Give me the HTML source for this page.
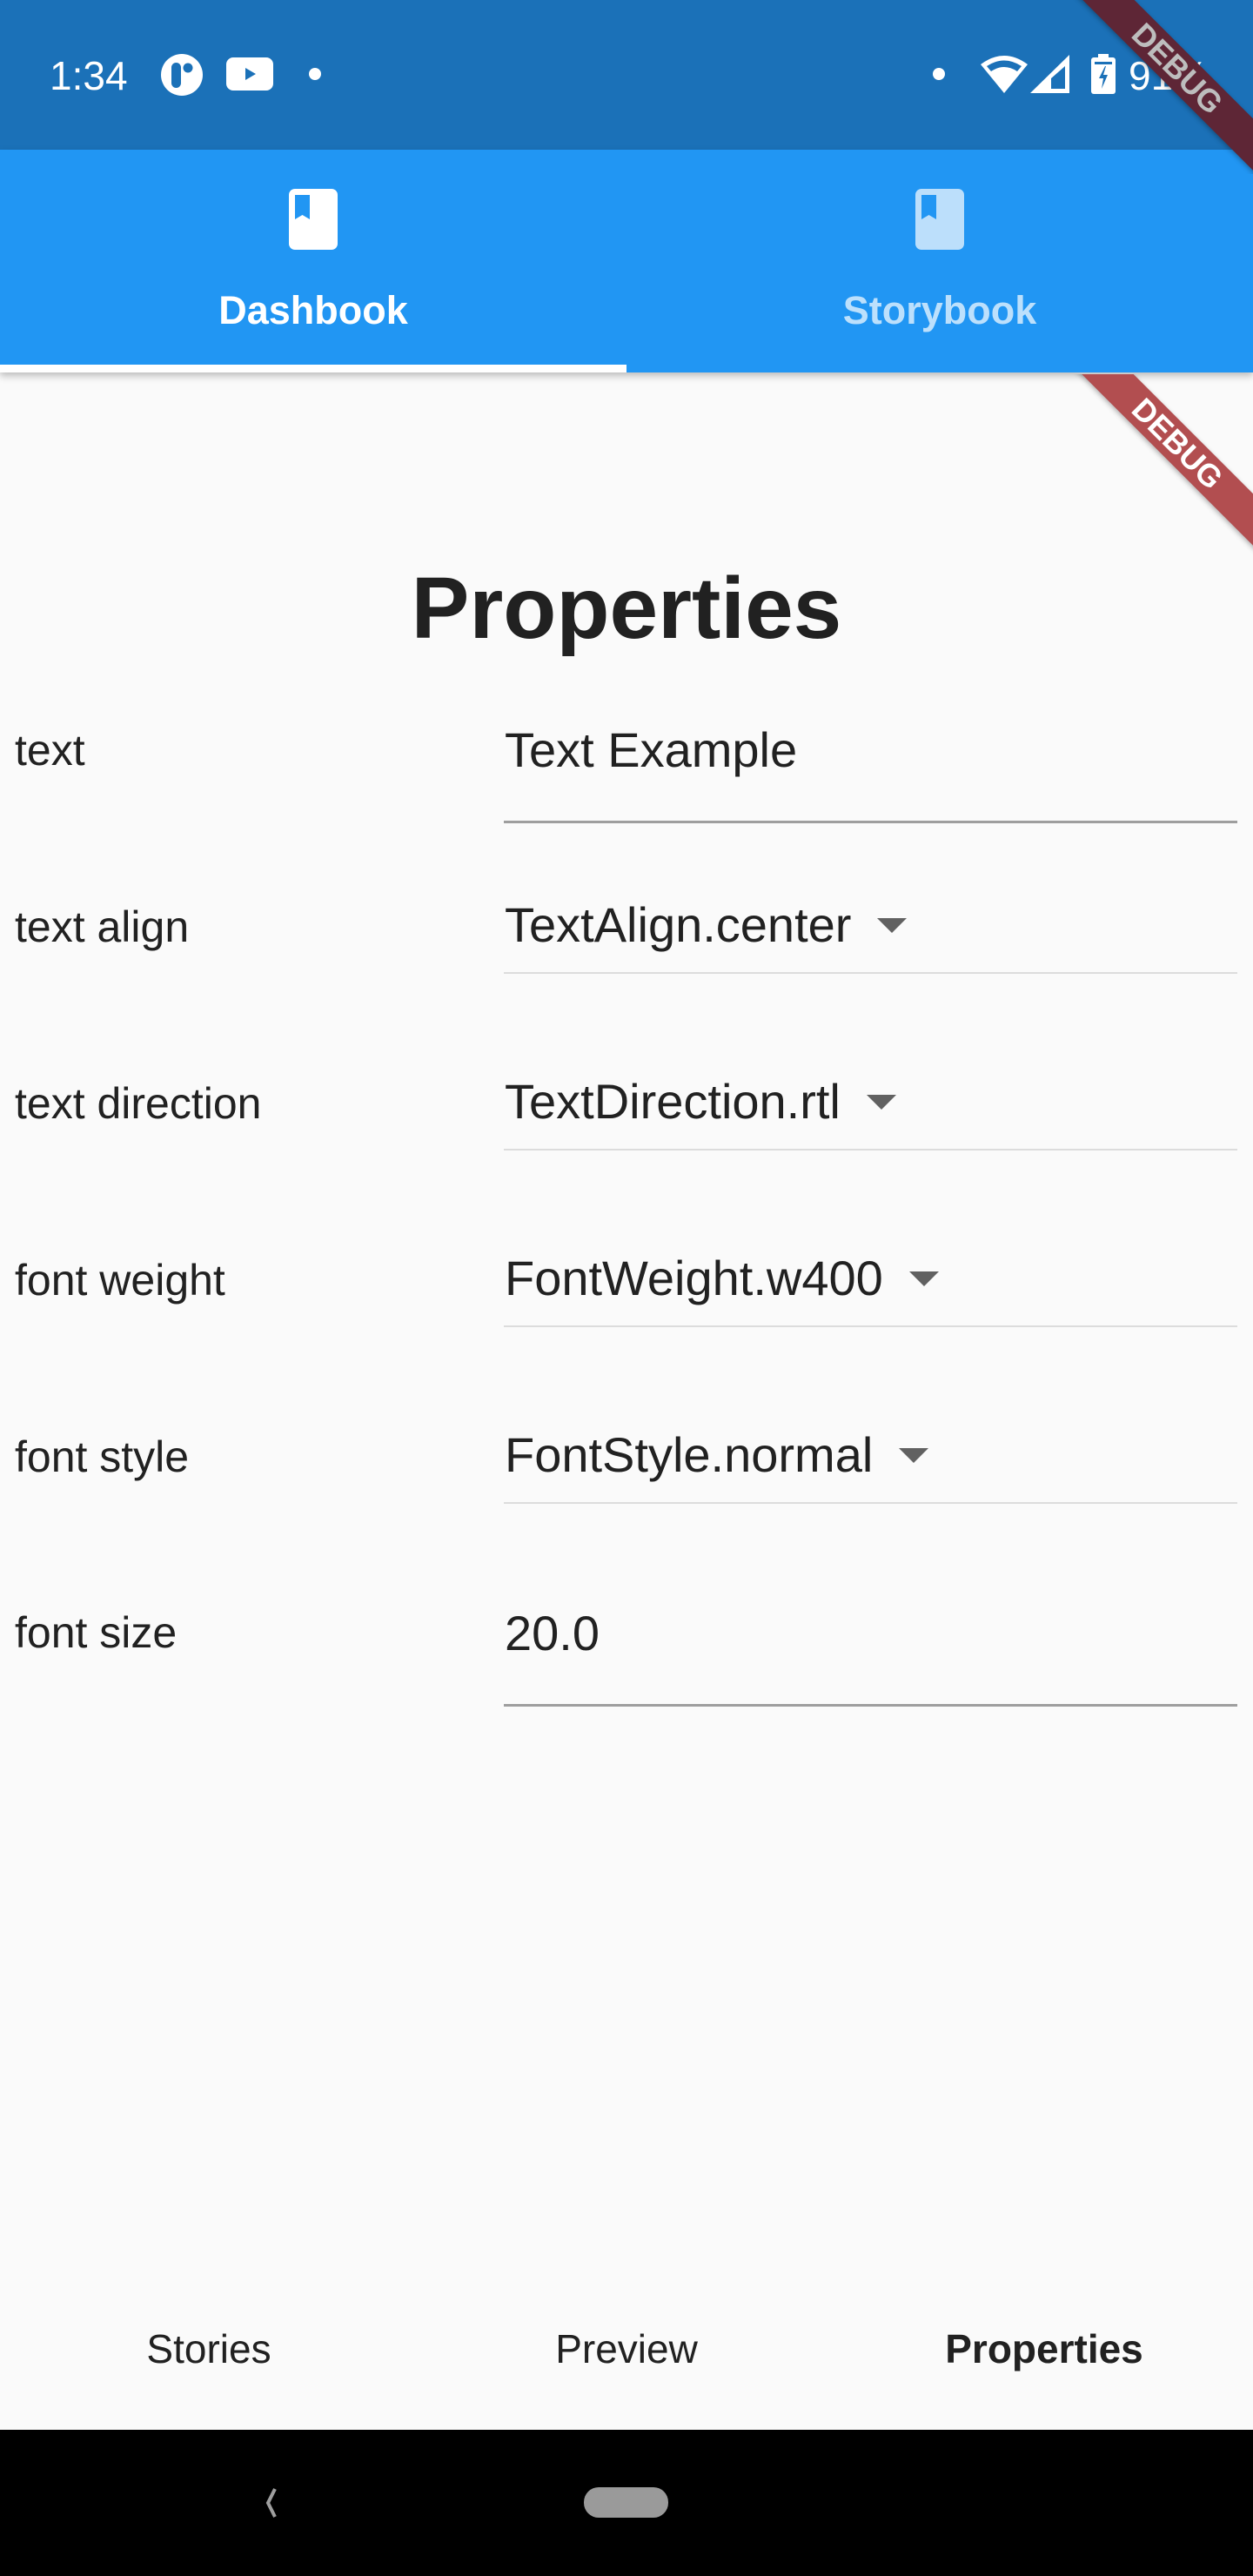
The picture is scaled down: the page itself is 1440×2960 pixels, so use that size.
<!DOCTYPE html>
<html><head><meta charset="utf-8">
<style>
*{margin:0;padding:0;box-sizing:border-box}
body{width:1440px;height:2960px;background:#fafafa;position:relative;overflow:hidden;font-family:"Liberation Sans",Roboto,sans-serif;color:#212121}
.a{position:absolute;white-space:nowrap;line-height:1}
.lbl{font-size:50px;left:17px}
.val{font-size:56px;left:580px}
.arr{display:inline-block;width:0;height:0;border-left:17px solid transparent;border-right:17px solid transparent;border-top:17px solid #616161;margin-left:30px;vertical-align:middle;position:relative;top:-4px}
.line{position:absolute;left:579px;width:843px;height:2px;background:#dcdcdc}
.line.t{height:3px;background:#9e9e9e}
</style></head><body>

<div style="position:absolute;left:0;top:0;width:1440px;height:172px;background:#1b71b8"></div>
<div class="a" style="left:57px;top:64px;font-size:46px;color:#fff">1:34</div>
<svg class="a" style="left:184px;top:61px" width="50" height="50" viewBox="0 0 50 50">
<circle cx="25" cy="25" r="24" fill="#fff"/>
<rect x="13" y="11" width="11" height="29" rx="5.5" fill="#1b71b8"/>
<circle cx="32" cy="17" r="5.5" fill="#1b71b8"/>
</svg>
<svg class="a" style="left:260px;top:66px" width="54" height="38" viewBox="0 0 54 38">
<rect x="0" y="0" width="54" height="38" rx="8" fill="#fff"/>
<path d="M22 12 L34 19 L22 26Z" fill="#1b71b8"/>
</svg>
<div class="a" style="left:355px;top:78px;width:14px;height:14px;border-radius:50%;background:#fff"></div>
<div class="a" style="left:1072px;top:78px;width:14px;height:14px;border-radius:50%;background:#fff"></div>
<svg class="a" style="left:1126px;top:62px" width="56" height="46" viewBox="0 0 56 46">
<path d="M1 12 Q28 -8 55 12 L28 45Z" fill="#fff"/>
<path d="M8 14 Q28 1 48 14 L43 20 Q28 10 13 20Z" fill="#1b71b8"/>
</svg>
<svg class="a" style="left:1184px;top:63px" width="46" height="45" viewBox="0 0 46 45">
<path d="M45 0 L45 44 L0 44Z" fill="#fff"/>
<path d="M40 13 L40 39 L24 39 L24 27Z" fill="#1b71b8"/>
</svg>
<svg class="a" style="left:1254px;top:62px" width="28" height="46" viewBox="0 0 28 46">
<rect x="8" y="0" width="12" height="5" fill="#fff"/>
<rect x="0" y="4" width="28" height="42" rx="3" fill="#fff"/>
<rect x="4" y="9" width="20" height="3" fill="#1b71b8"/>
<path d="M16 14 L9 28 L14 28 L12 40 L19 24 L14 24 L17 14Z" fill="#1b71b8"/>
</svg>
<div class="a" style="left:1297px;top:64px;font-size:46px;color:#fff">91%</div>

<div style="position:absolute;left:0;top:172px;width:1440px;height:256px;background:#2196f3;box-shadow:0 4px 8px rgba(0,0,0,0.25)"></div>
<svg class="a" style="left:332px;top:217px" width="56" height="70" viewBox="0 0 56 70">
<rect width="56" height="70" rx="7" fill="#fff"/>
<path d="M7 7 L24 7 L24 35 L15.5 30 L7 35Z" fill="#2196f3"/>
</svg>
<svg class="a" style="left:1052px;top:217px" width="56" height="70" viewBox="0 0 56 70">
<rect width="56" height="70" rx="7" fill="#bcdffb"/>
<path d="M7 7 L24 7 L24 35 L15.5 30 L7 35Z" fill="#2196f3"/>
</svg>
<div class="a" style="left:0;width:720px;text-align:center;top:334px;font-size:45px;font-weight:bold;color:#fff">Dashbook</div>
<div class="a" style="left:720px;width:720px;text-align:center;top:334px;font-size:45px;font-weight:bold;color:rgba(255,255,255,0.7)">Storybook</div>
<div style="position:absolute;left:0;top:419px;width:720px;height:9px;background:#fff"></div>

<div style="position:absolute;left:0;top:0;width:1440px;height:200px;overflow:hidden">
 <div style="position:absolute;left:1053px;top:58px;width:600px;height:42px;background:#5e2636;transform:rotate(45deg);color:#bdbdbd;font-weight:bold;font-size:36px;line-height:42px;text-align:center;box-shadow:0 2px 6px rgba(0,0,0,0.3)">DEBUG</div>
</div>
<div style="position:absolute;left:0;top:430px;width:1440px;height:400px;overflow:hidden">
 <div style="position:absolute;left:1053px;top:59px;width:600px;height:42px;background:#b24e50;transform:rotate(45deg);color:#fff;font-weight:bold;font-size:36px;line-height:42px;text-align:center;box-shadow:0 2px 6px rgba(0,0,0,0.3)">DEBUG</div>
</div>

<div class="a" style="left:0;width:1440px;text-align:center;top:649px;font-size:100px;font-weight:bold">Properties</div>

<div class="a lbl" style="top:837px">text</div>
<div class="a val" style="top:834px">Text Example</div>
<div class="line t" style="top:943px"></div>

<div class="a lbl" style="top:1040px">text align</div>
<div class="a val" style="top:1035px">TextAlign.center<span class="arr"></span></div>
<div class="line" style="top:1117px"></div>

<div class="a lbl" style="top:1243px">text direction</div>
<div class="a val" style="top:1238px">TextDirection.rtl<span class="arr"></span></div>
<div class="line" style="top:1320px"></div>

<div class="a lbl" style="top:1446px">font weight</div>
<div class="a val" style="top:1441px">FontWeight.w400<span class="arr"></span></div>
<div class="line" style="top:1523px"></div>

<div class="a lbl" style="top:1649px">font style</div>
<div class="a val" style="top:1644px">FontStyle.normal<span class="arr"></span></div>
<div class="line" style="top:1726px"></div>

<div class="a lbl" style="top:1851px">font size</div>
<div class="a val" style="top:1849px">20.0</div>
<div class="line t" style="top:1958px"></div>

<div class="a" style="left:0;width:480px;text-align:center;top:2676px;font-size:46px">Stories</div>
<div class="a" style="left:480px;width:480px;text-align:center;top:2676px;font-size:46px">Preview</div>
<div class="a" style="left:960px;width:480px;text-align:center;top:2676px;font-size:46px;font-weight:bold">Properties</div>

<div style="position:absolute;left:0;top:2792px;width:1440px;height:168px;background:#000"></div>
<svg class="a" style="left:298px;top:2858px" width="24" height="36" viewBox="0 0 24 36">
<path d="M18 2 L10 18 L18 34" stroke="#9e9e9e" stroke-width="4" fill="none"/>
</svg>
<div style="position:absolute;left:671px;top:2858px;width:97px;height:35px;border-radius:17px;background:#9a9a9a"></div>
</body></html>
